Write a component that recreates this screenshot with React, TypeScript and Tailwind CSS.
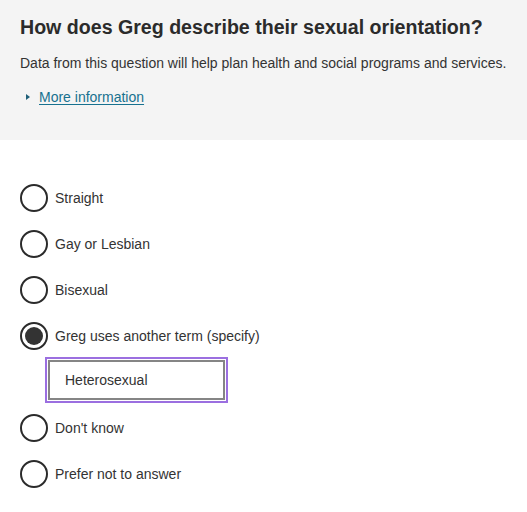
import React from "react";

const options = [
  { label: "Straight", checked: false },
  { label: "Gay or Lesbian", checked: false },
  { label: "Bisexual", checked: false },
  { label: "Greg uses another term (specify)", checked: true },
];
const options2 = ["Don't know", "Prefer not to answer"];

function Radio({ checked }: { checked: boolean }) {
  return (
    <span className="flex h-[28px] w-[28px] shrink-0 items-center justify-center rounded-full border-2 border-[#2b2b2b] bg-white">
      {checked && <span className="h-[18px] w-[18px] rounded-full bg-[#333333]" />}
    </span>
  );
}

function Row({ label, checked }: { label: string; checked: boolean }) {
  return (
    <div className="flex items-center gap-[7px]">
      <Radio checked={checked} />
      <span className="text-[14px] leading-[18px] text-[#333333]">{label}</span>
    </div>
  );
}

export default function App() {
  return (
    <div className="min-h-[512px] bg-white font-[Liberation_Sans,Arial,sans-serif] text-[#333333]">
      <div className="h-[140px] bg-[#f4f4f4] px-[20px] pt-[15px]">
        <h1 className="text-[19.6px] font-bold leading-[24px] text-[#2b2b2b]">
          How does Greg describe their sexual orientation?
        </h1>
        <p className="mt-[15px] text-[14px] leading-[18px] text-[#333333]">
          Data from this question will help plan health and social programs and services.
        </p>
        <div className="mt-[16px] flex items-center">
          <svg width="8" height="8" viewBox="0 0 8 8" className="ml-[4px] mr-[7px]">
            <path d="M2 1 L6 4 L2 7 Z" fill="#1f5f78" />
          </svg>
          <a href="#" className="text-[14px] leading-[18px] text-[#17718f] underline underline-offset-2">
            More information
          </a>
        </div>
      </div>
      <div className="flex flex-col px-[20px] pt-[44px]">
        <div className="flex flex-col gap-[18px]">
          {options.map((o) => (
            <Row key={o.label} label={o.label} checked={o.checked} />
          ))}
        </div>
        <div className="ml-[25px] mt-[7px] w-[183px] h-[46px] border-2 border-[#9b6fe0] bg-white p-[1px]">
          <div className="flex h-full items-center border-2 border-[#858585] px-[15px] text-[14px] text-[#333333]">
            Heterosexual
          </div>
        </div>
        <div className="mt-[11px] flex flex-col gap-[18px]">
          {options2.map((l) => (
            <Row key={l} label={l} checked={false} />
          ))}
        </div>
      </div>
    </div>
  );
}
